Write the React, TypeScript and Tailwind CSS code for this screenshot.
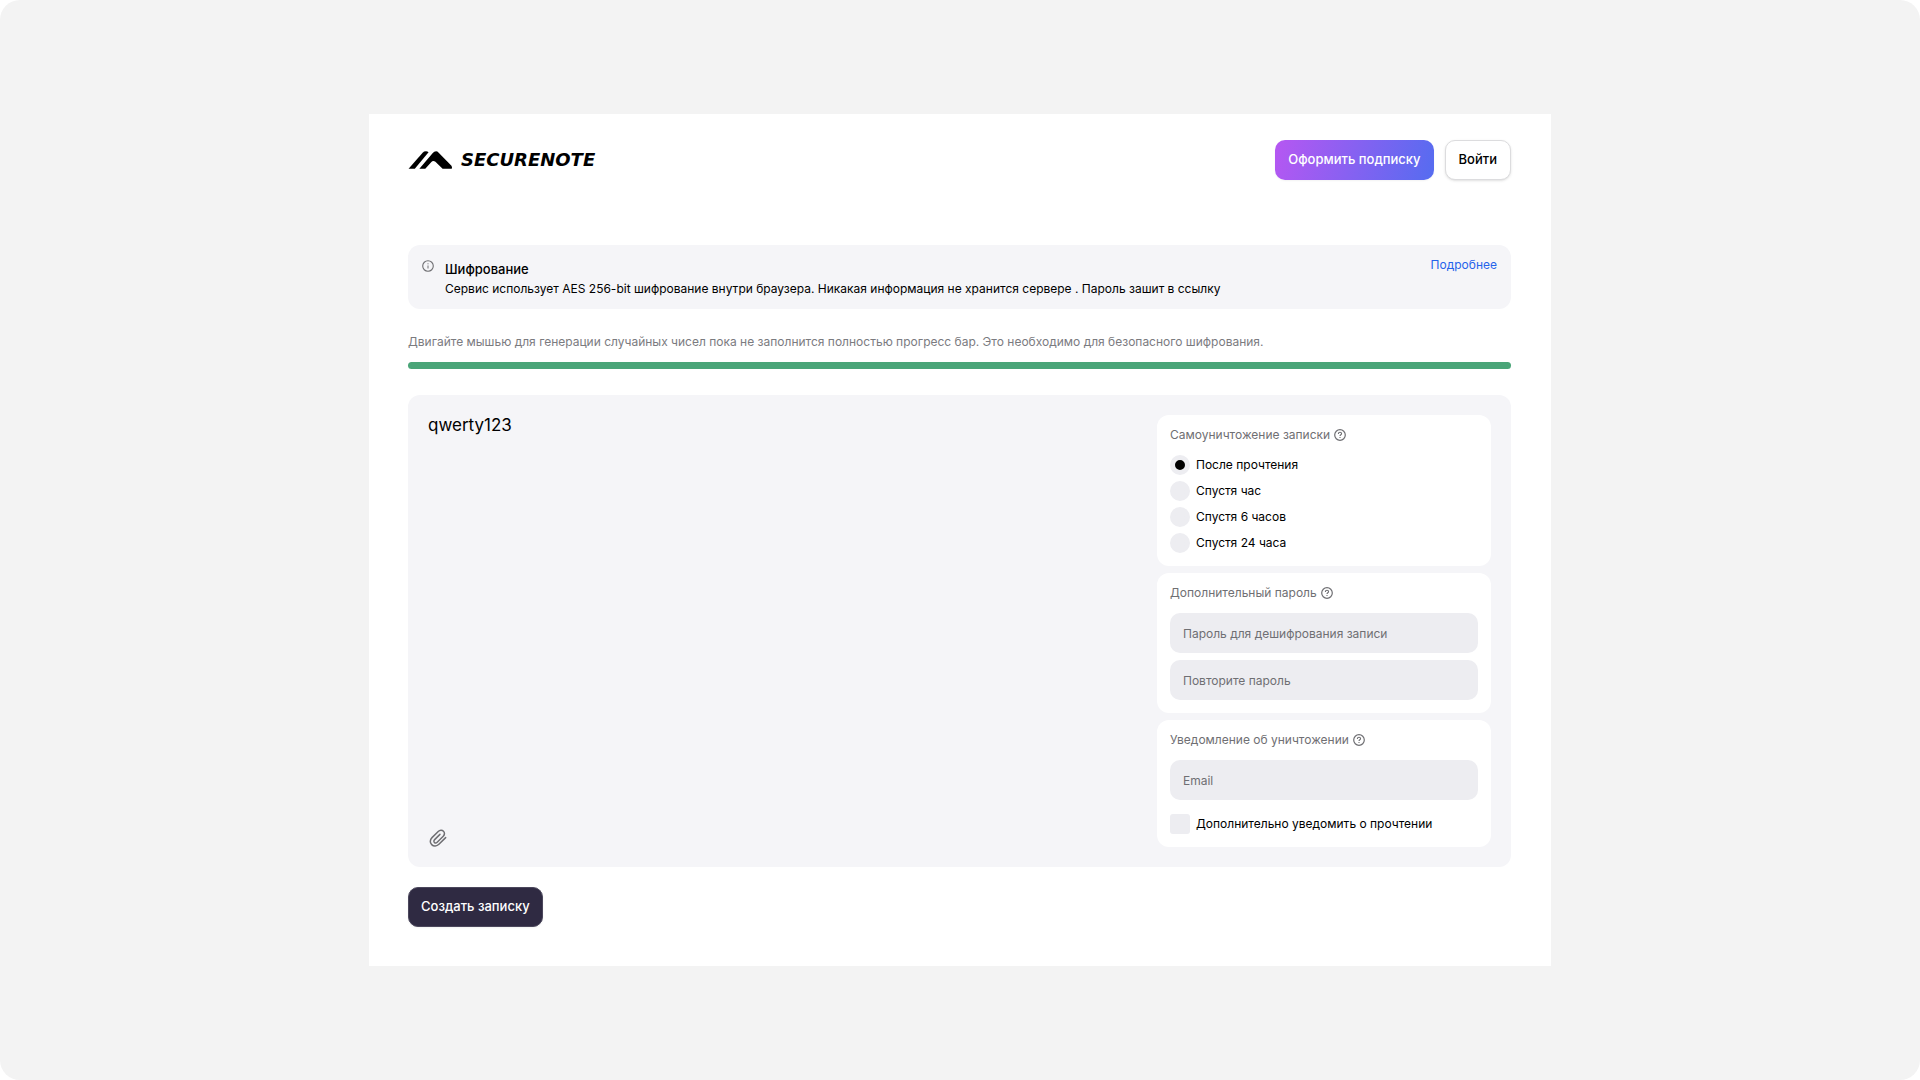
import { useState } from "react";
import type { InputHTMLAttributes, ReactNode } from "react";

const lifetimes = [
  { id: "read", label: "После прочтения" },
  { id: "1h", label: "Спустя час" },
  { id: "6h", label: "Спустя 6 часов" },
  { id: "24h", label: "Спустя 24 часа" },
];

function Logo() {
  return (
    <a href="#" className="flex items-center gap-2 text-black">
      <svg width="45" height="18" viewBox="147 150 134 55" fill="currentColor" aria-hidden="true">
        <path d="M147 204L190 155Q194 151 200 151Q205 151 208 154L166 204Z" />
        <path d="M180 204L221 156Q225 151 231 151Q235 151 239 155L278 195Q281 199 279 204H251L229 183Q222 178 216 184L198 204Z" />
      </svg>
      <span className="font-['DejaVu_Sans',sans-serif] text-[18px] leading-4 font-bold italic">SECURENOTE</span>
    </a>
  );
}

function InfoIcon() {
  return (
    <svg className="mt-[2px] shrink-0" width="12" height="12" viewBox="0 0 12 12" fill="none" stroke="#6f6f73" aria-hidden="true">
      <circle cx="6" cy="6" r="5.3" strokeWidth="1.1" />
      <path d="M6 5.5V8.5M6 3.3V4.3" strokeWidth="1" />
    </svg>
  );
}

function HelpIcon() {
  return (
    <svg width="12" height="12" viewBox="0 0 12 12" fill="none" stroke="#6f6f73" aria-hidden="true">
      <circle cx="6" cy="6" r="5.3" strokeWidth="1.2" />
      <path d="M4.4 4.9C4.4 3.9 5.1 3.3 6 3.3S7.6 3.9 7.6 4.7C7.6 5.8 6 5.8 6 7M6 7.9V8.9" strokeWidth="1.1" />
    </svg>
  );
}

function ClipIcon() {
  return (
    <svg width="18" height="18" viewBox="0 0 24 24" fill="none" stroke="#6f6f73" strokeWidth="2" strokeLinecap="round" strokeLinejoin="round">
      <path d="M22.2 11.5L13.2 20.3C10.3 23.1 6.2 23.3 3.6 20.8C1 18.3 1.1 14.4 4 11.5L12.3 3.3C14.4 1.2 17.4 1 19.3 2.9C21.2 4.7 21 7.6 19 9.6L10.9 17.6C9.7 18.8 8.2 18.9 7.2 17.9C6.2 16.9 6.3 15.4 7.5 14.2L14.6 7.2" />
    </svg>
  );
}

function Section({ title, children }: { title: string; children: ReactNode }) {
  return (
    <fieldset className="min-w-0 rounded-xl bg-white p-[13px]">
      <legend className="float-left flex h-[14px] w-full items-center gap-1 text-xs text-[#6f6f73]">
        {title}
        <HelpIcon />
      </legend>
      <div className="clear-both">{children}</div>
    </fieldset>
  );
}

function Field({ label, ...props }: { label: string } & InputHTMLAttributes<HTMLInputElement>) {
  return (
    <input
      aria-label={label}
      placeholder={label}
      className="block h-10 w-full rounded-[10px] bg-[#ededf1] px-[13px] text-xs text-black outline-none placeholder:text-[#6f6f73]"
      {...props}
    />
  );
}

export default function App() {
  const [note, setNote] = useState("qwerty123");
  const [lifetime, setLifetime] = useState("read");

  return (
    <div className="flex min-h-screen items-center justify-center rounded-[20px] bg-[#f3f3f3] font-[Inter,sans-serif] text-black">
      <main className="w-full max-w-[1182px] bg-white pt-[26px] pr-10 pb-[39px] pl-[39px]">
        <header className="flex items-center justify-between">
          <Logo />
          <div className="flex gap-[11px]">
            <button className="h-10 rounded-[10px] bg-linear-[105deg] from-[#b657f2] to-[#556cf0] px-[13px] text-[13px] font-medium text-white shadow-xs">
              Оформить подписку
            </button>
            <button className="h-10 rounded-[10px] border border-[#dcdcde] bg-white px-[13px] text-[13px] font-medium shadow-sm">
              Войти
            </button>
          </div>
        </header>

        <section className="mt-[65px] flex gap-[11px] rounded-xl bg-[#f5f5f8] px-[14px] pt-[13px] pb-[11px]">
          <InfoIcon />
          <div className="flex-1">
            <h2 className="text-[13px] leading-[22px] font-medium">Шифрование</h2>
            <p className="text-xs leading-[18px]">
              Сервис использует AES 256-bit шифрование внутри браузера. Никакая информация не хранится сервере . Пароль зашит в ссылку
            </p>
          </div>
          <a href="#" className="text-xs leading-[14px] text-[#2563eb]">
            Подробнее
          </a>
        </section>

        <p className="mt-6 text-xs leading-[18px] text-[#7b7b7f]">
          Двигайте мышью для генерации случайных чисел пока не заполнится полностью прогресс бар. Это необходимо для безопасного шифрования.
        </p>
        <div role="progressbar" aria-valuenow={100} className="mt-[11px] h-[7px] rounded-full bg-[#4aa578]" />

        <section className="mt-[26px] flex gap-5 rounded-xl bg-[#f5f5f8] p-5">
          <div className="flex flex-1 flex-col items-start">
            <textarea
              aria-label="Текст записки"
              value={note}
              onChange={(e) => setNote(e.target.value)}
              className="w-full flex-1 resize-none bg-transparent text-[17px] leading-5 outline-none"
            />
            <button aria-label="Прикрепить файл" className="flex h-[18px] w-5 items-center justify-center">
              <ClipIcon />
            </button>
          </div>

          <div className="flex w-[334px] flex-col gap-[7px]">
            <Section title="Самоуничтожение записки">
              <div className="flex flex-col gap-[6px] pt-[13px]">
                {lifetimes.map((item) => (
                  <label key={item.id} className="flex items-center gap-[6px] text-xs leading-5">
                    <input
                      type="radio"
                      name="lifetime"
                      checked={lifetime === item.id}
                      onChange={() => setLifetime(item.id)}
                      className="size-5 appearance-none rounded-full border-5 border-[#ededf1] bg-[#ededf1] checked:bg-black"
                    />
                    {item.label}
                  </label>
                ))}
              </div>
            </Section>

            <Section title="Дополнительный пароль">
              <div className="flex flex-col gap-[7px] pt-[13px]">
                <Field type="password" label="Пароль для дешифрования записи" />
                <Field type="password" label="Повторите пароль" />
              </div>
            </Section>

            <Section title="Уведомление об уничтожении">
              <div className="pt-[13px]">
                <Field type="email" label="Email" />
                <label className="mt-[14px] flex items-center gap-[6px] text-xs leading-5">
                  <input type="checkbox" className="size-5 appearance-none rounded-[3px] bg-[#ededf1] checked:bg-black" />
                  Дополнительно уведомить о прочтении
                </label>
              </div>
            </Section>
          </div>
        </section>

        <button className="mt-5 block h-10 rounded-[10px] border border-[#4b475c] bg-[#2f2a42] px-3 text-[13px] font-medium text-white shadow-xs">
          Создать записку
        </button>
      </main>
    </div>
  );
}
